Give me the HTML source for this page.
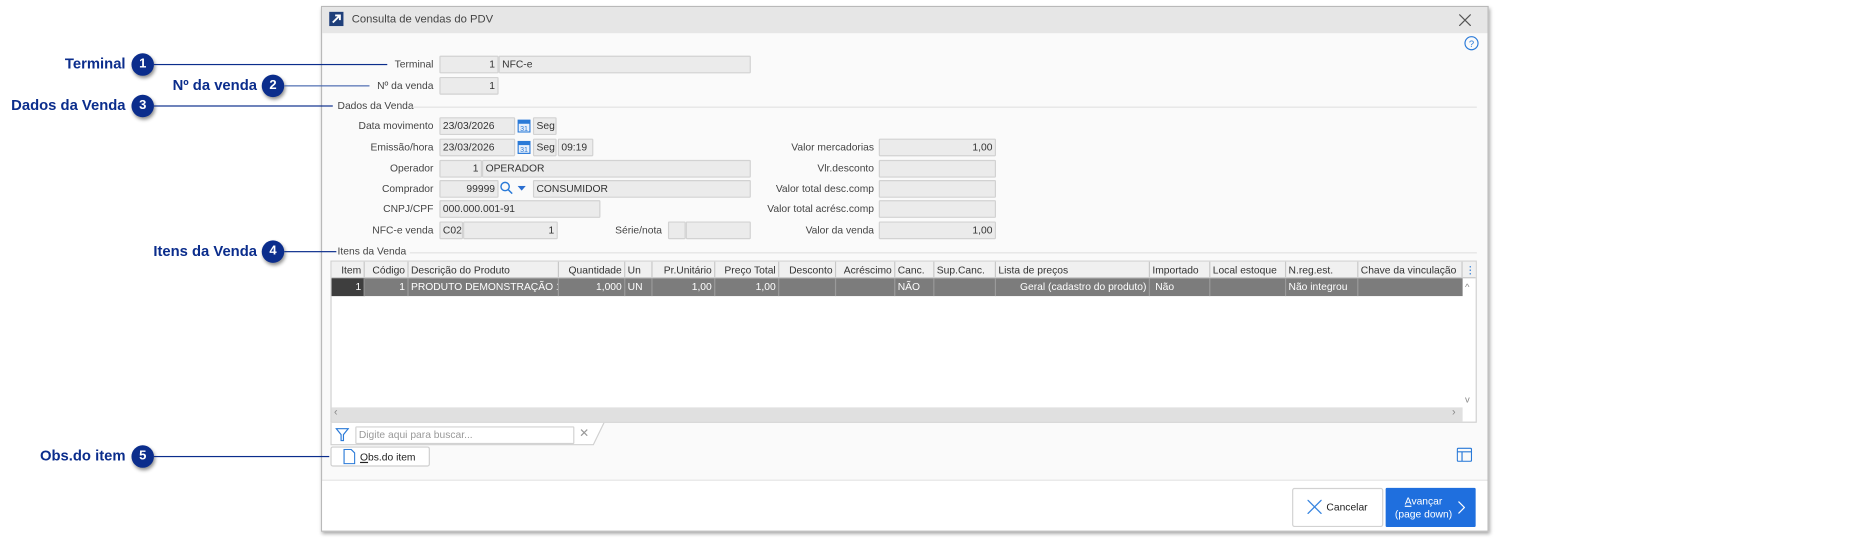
<!DOCTYPE html>
<html><head><meta charset="utf-8"><style>
*{box-sizing:border-box;margin:0;padding:0}
html,body{width:1857px;height:546px;overflow:hidden;background:#fff}
#s{position:absolute;left:0;top:0;width:1568px;height:461px;transform:scale(1.18431);transform-origin:0 0;font-family:"Liberation Sans",sans-serif;font-size:8.7px;color:#333}
.a{position:absolute}
.lb{position:absolute;text-align:right;width:150px;line-height:15px;color:#444}
.in{position:absolute;height:15px;background:#ebebeb;border:1px solid #d2d2d2;border-radius:1px;line-height:13px;padding:0 2px;white-space:nowrap;overflow:hidden;color:#333}
.r{text-align:right}
.an{position:absolute;font-weight:bold;font-size:12.5px;color:#0b2d8c;text-align:right;width:200px;line-height:16px}
.c{position:absolute;width:19px;height:19px;border-radius:50%;background:#0b2d8c;color:#fff;font-weight:bold;font-size:11px;text-align:center;line-height:19px;box-shadow:1px 2px 3px rgba(0,0,0,.45)}
.ln{position:absolute;height:1px;background:#0b2d8c}
.hd div,.rw div{position:absolute;top:0;height:100%;border-right:1px solid #c8c8c8;padding:0 2px;white-space:nowrap;overflow:hidden;line-height:14px}
.rw div{border-right:1px solid #9a9a9a;color:#fff}
</style></head><body><div id="s">
<div class="a" style="left:271px;top:5px;width:986px;height:444px;background:#fafafa;border:1px solid #b9b9b9;box-shadow:1px 2px 3px rgba(0,0,0,.35)"></div>
<div class="a" style="left:272px;top:6px;width:984px;height:22px;background:#e6e6e6"></div>
<div class="a" style="left:278px;top:10px;width:12px;height:12px;background:#1f3f7a"><svg width="12" height="12"><path d="M3 9L9 3M5 3h4v4" stroke="#fff" stroke-width="1.6" fill="none"/></svg></div>
<div class="a" style="left:297px;top:11px;font-size:9.5px;color:#444">Consulta de vendas do PDV</div>
<svg class="a" style="left:1232px;top:12px" width="10" height="10"><path d="M0 0L10 10M10 0L0 10" stroke="#555" stroke-width="1"/></svg>
<svg class="a" style="left:1236px;top:30px" width="13" height="13"><circle cx="6.5" cy="6.5" r="5.5" stroke="#2a7ad8" fill="none"/><text x="6.5" y="9.5" font-size="8" fill="#2a7ad8" text-anchor="middle" font-family="Liberation Sans">?</text></svg>

<div class="lb" style="left:216px;top:47px">Terminal</div>
<div class="in r" style="left:371px;top:47px;width:50px">1</div>
<div class="in" style="left:421px;top:47px;width:213px">NFC-e</div>
<div class="lb" style="left:216px;top:65px">Nº da venda</div>
<div class="in r" style="left:371px;top:65px;width:50px">1</div>

<div class="a" style="left:285px;top:84px;color:#444">Dados da Venda</div>
<div class="a" style="left:348px;top:90px;width:899px;height:1px;background:#e2e2e2"></div>

<div class="lb" style="left:216px;top:99px">Data movimento</div>
<div class="in" style="left:371px;top:99px;width:64px">23/03/2026</div>
<svg class="a" style="left:437px;top:100px" width="11" height="12"><rect x=".5" y="1.5" width="10" height="10" fill="#e8f0fb" stroke="#2a7ad8"/><rect x=".5" y="1.5" width="10" height="3" fill="#2a7ad8"/><text x="5.5" y="10.5" font-size="6" fill="#2a7ad8" text-anchor="middle" font-family="Liberation Sans">31</text></svg>
<div class="in" style="left:450px;top:99px;width:20px">Seg</div>

<div class="lb" style="left:216px;top:117px">Emissão/hora</div>
<div class="in" style="left:371px;top:117px;width:64px">23/03/2026</div>
<svg class="a" style="left:437px;top:118px" width="11" height="12"><rect x=".5" y="1.5" width="10" height="10" fill="#e8f0fb" stroke="#2a7ad8"/><rect x=".5" y="1.5" width="10" height="3" fill="#2a7ad8"/><text x="5.5" y="10.5" font-size="6" fill="#2a7ad8" text-anchor="middle" font-family="Liberation Sans">31</text></svg>
<div class="in" style="left:450px;top:117px;width:20px">Seg</div>
<div class="in" style="left:471px;top:117px;width:30px">09:19</div>

<div class="lb" style="left:216px;top:135px">Operador</div>
<div class="in r" style="left:371px;top:135px;width:36px">1</div>
<div class="in" style="left:407px;top:135px;width:227px">OPERADOR</div>

<div class="lb" style="left:216px;top:152px">Comprador</div>
<div class="in r" style="left:371px;top:152px;width:50px">99999</div>
<svg class="a" style="left:422px;top:153px" width="11" height="12"><circle cx="4.5" cy="4.5" r="3.5" stroke="#2a7ad8" stroke-width="1.2" fill="none"/><path d="M7 7l3.5 3.5" stroke="#2a7ad8" stroke-width="1.3"/></svg>
<svg class="a" style="left:437px;top:157px" width="8" height="5"><path d="M0 0h7l-3.5 4z" fill="#2a6ed0"/></svg>
<div class="in" style="left:450px;top:152px;width:184px">CONSUMIDOR</div>

<div class="lb" style="left:216px;top:169px">CNPJ/CPF</div>
<div class="in" style="left:371px;top:169px;width:136px">000.000.001-91</div>

<div class="lb" style="left:216px;top:187px">NFC-e venda</div>
<div class="in" style="left:371px;top:187px;width:20px">C02</div>
<div class="in r" style="left:391px;top:187px;width:80px">1</div>
<div class="lb" style="left:409px;top:187px">Série/nota</div>
<div class="in" style="left:564px;top:187px;width:15px"></div>
<div class="in" style="left:579px;top:187px;width:55px"></div>

<div class="lb" style="left:588px;top:117px">Valor mercadorias</div>
<div class="in r" style="left:742px;top:117px;width:99px">1,00</div>
<div class="lb" style="left:588px;top:135px">Vlr.desconto</div>
<div class="in" style="left:742px;top:135px;width:99px"></div>
<div class="lb" style="left:588px;top:152px">Valor total desc.comp</div>
<div class="in" style="left:742px;top:152px;width:99px"></div>
<div class="lb" style="left:588px;top:169px">Valor total acrésc.comp</div>
<div class="in" style="left:742px;top:169px;width:99px"></div>
<div class="lb" style="left:588px;top:187px">Valor da venda</div>
<div class="in r" style="left:742px;top:187px;width:99px">1,00</div>

<div class="a" style="left:285px;top:207px;color:#444">Itens da Venda</div>
<div class="a" style="left:346px;top:213px;width:901px;height:1px;background:#e2e2e2"></div>

<div class="a" style="left:279px;top:220px;width:968px;height:137px;background:#fff;border:1px solid #d0d0d0"></div>
<div class="a hd" style="left:280px;top:221px;width:966px;height:14px;background:#f0f0f0;border-bottom:1px solid #c8c8c8;color:#333">
<div class="r" style="left:0;width:28px">Item</div><div class="r" style="left:28px;width:37px">Código</div><div style="left:65px;width:127px">Descrição do Produto</div><div class="r" style="left:192px;width:56px">Quantidade</div><div style="left:248px;width:23px">Un</div><div class="r" style="left:271px;width:53px">Pr.Unitário</div><div class="r" style="left:324px;width:54px">Preço Total</div><div class="r" style="left:378px;width:48px">Desconto</div><div class="r" style="left:426px;width:50px">Acréscimo</div><div style="left:476px;width:33px">Canc.</div><div style="left:509px;width:52px">Sup.Canc.</div><div style="left:561px;width:130px">Lista de preços</div><div style="left:691px;width:51px">Importado</div><div style="left:742px;width:64px">Local estoque</div><div style="left:806px;width:61px">N.reg.est.</div><div style="left:867px;width:88px">Chave da vinculação</div><div style="left:955px;width:11px;border:none;color:#2a7ad8">⋮</div>
</div>
<div class="a rw" style="left:280px;top:235px;width:955px;height:15px;background:#7c7c7c">
<div class="r" style="left:0;width:28px;background:#3e3e3e">1</div><div class="r" style="left:28px;width:37px">1</div><div style="left:65px;width:127px">PRODUTO DEMONSTRAÇÃO 1</div><div class="r" style="left:192px;width:56px">1,000</div><div style="left:248px;width:23px">UN</div><div class="r" style="left:271px;width:53px">1,00</div><div class="r" style="left:324px;width:54px">1,00</div><div style="left:378px;width:48px"></div><div style="left:426px;width:50px"></div><div style="left:476px;width:33px">NÃO</div><div style="left:509px;width:52px"></div><div class="r" style="left:561px;width:130px">Geral (cadastro do produto)</div><div style="left:691px;width:51px">&nbsp;Não</div><div style="left:742px;width:64px"></div><div style="left:806px;width:61px">Não integrou</div><div style="left:867px;width:88px;border:none"></div>
</div>
<div class="a" style="left:1237px;top:238px;color:#888;font-size:8px">^</div>
<div class="a" style="left:1237px;top:333px;color:#888;font-size:8px">v</div>
<div class="a" style="left:280px;top:344px;width:955px;height:12px;background:#e0e0e0"></div>
<div class="a" style="left:282px;top:343px;color:#888;font-size:9px">‹</div>
<div class="a" style="left:1226px;top:343px;color:#888;font-size:9px">›</div>

<svg class="a" style="left:279px;top:357px" width="232" height="20"><path d="M0.5 0V18.5H222L231 0" stroke="#d0d0d0" fill="#fff"/></svg>
<svg class="a" style="left:283px;top:361px" width="12" height="12"><path d="M1 1h10L7 6v5L5 11V6z" stroke="#2a7ad8" fill="none"/></svg>
<div class="in" style="left:300px;top:360px;width:185px;background:#fff;color:#999">Digite aqui para buscar...</div>
<div class="a" style="left:489px;top:361px;color:#999;font-size:10px">✕</div>

<div class="a" style="left:279px;top:377px;width:84px;height:17px;border:1px solid #cfcfcf;border-radius:2px;background:#fff"></div>
<svg class="a" style="left:290px;top:379px" width="10" height="13"><path d="M.5.5h6l3 3v9H.5z" stroke="#2a7ad8" fill="#fff"/></svg>
<div class="a" style="left:304px;top:381px;color:#222"><u>O</u>bs.do item</div>
<svg class="a" style="left:1230px;top:378px" width="13" height="12"><rect x=".5" y=".5" width="12" height="11" rx="1" stroke="#2a7ad8" fill="none"/><path d="M.5 3.5h12M4.5 3.5v8" stroke="#2a7ad8"/></svg>

<div class="a" style="left:272px;top:405px;width:984px;height:1px;background:#e2e2e2"></div>
<div class="a" style="left:272px;top:406px;width:984px;height:42px;background:#fff"></div>
<div class="a" style="left:1091px;top:412px;width:77px;height:33px;border:1px solid #d2d2d2;border-radius:2px;background:#fff"></div>
<svg class="a" style="left:1104px;top:422px" width="12" height="12"><path d="M0 0L12 12M12 0L0 12" stroke="#3a86e0" stroke-width="1.1"/></svg>
<div class="a" style="left:1120px;top:423px;color:#222">Cancelar</div>
<div class="a" style="left:1170px;top:412px;width:76px;height:33px;background:#1f6fde;border-radius:1px"></div>
<div class="a" style="left:1173px;top:418px;width:58px;color:#fff;text-align:center;line-height:11px"><u>A</u>vançar<br>(page down)</div>
<svg class="a" style="left:1231px;top:423px" width="6" height="11"><path d="M.5.5l5 5-5 5" stroke="#fff" fill="none"/></svg>

<div class="an" style="left:-94px;top:46px">Terminal</div>
<div class="c" style="left:111px;top:45px">1</div>
<div class="ln" style="left:130px;top:54px;width:197px"></div>
<div class="an" style="left:17px;top:64px">Nº da venda</div>
<div class="c" style="left:221px;top:63px">2</div>
<div class="ln" style="left:240px;top:72px;width:72px;background:#4a6ab0"></div>
<div class="an" style="left:-94px;top:81px">Dados da Venda</div>
<div class="c" style="left:111px;top:80px">3</div>
<div class="ln" style="left:130px;top:89px;width:151px"></div>
<div class="an" style="left:17px;top:204px">Itens da Venda</div>
<div class="c" style="left:221px;top:203px">4</div>
<div class="ln" style="left:240px;top:212px;width:44px"></div>
<div class="an" style="left:-94px;top:377px">Obs.do item</div>
<div class="c" style="left:111px;top:376px">5</div>
<div class="ln" style="left:130px;top:385px;width:148px"></div>
</div></body></html>
